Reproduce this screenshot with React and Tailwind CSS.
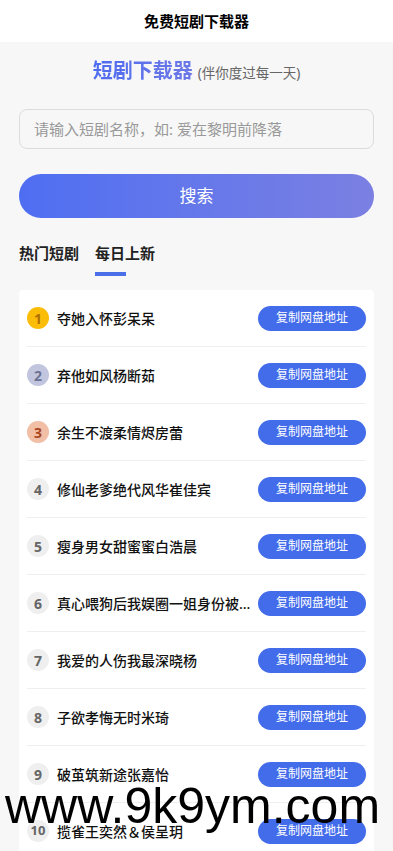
import React, { useState } from "react";

const dramas = [
  "夺她入怀彭呆呆",
  "弃他如风杨断茹",
  "余生不渡柔情烬房蕾",
  "修仙老爹绝代风华崔佳宾",
  "瘦身男女甜蜜蜜白浩晨",
  "真心喂狗后我娱圈一姐身份被曝光了",
  "我爱的人伤我最深晓杨",
  "子欲孝悔无时米琦",
  "破茧筑新途张嘉怡",
  "揽雀王奕然＆侯呈玥",
];

const badgeStyles = [
  "bg-[#fbbd08] text-[#b06d00]",
  "bg-[#c1c6de] text-[#6c7294]",
  "bg-[#f1bea6] text-[#a8461e]",
];

function RankBadge({ n }) {
  const cls = badgeStyles[n - 1] || "bg-[#efefef] text-[#666666]";
  return (
    <div
      className={`w-[22px] h-[22px] shrink-0 rounded-full flex items-center justify-center font-bold ${
        n >= 10 ? "text-[13px]" : "text-[14px]"
      } ${cls}`}
    >
      {n}
    </div>
  );
}

export default function App() {
  const [tab, setTab] = useState(1);
  const [query, setQuery] = useState("");

  return (
    <div
      className="relative min-h-screen bg-[#f7f7f7] text-[#111]"
      style={{ fontFamily: '"Noto Sans", "Noto Sans CJK SC", sans-serif' }}
    >
      {/* top bar */}
      <div className="h-[42px] bg-white flex items-center justify-center">
        <span className="text-[15px] font-bold text-black">免费短剧下载器</span>
      </div>

      <div className="px-[19px]">
        {/* title */}
        <div className="flex items-baseline justify-center pt-[14px] h-[60px]">
          <span className="text-[20px] font-bold bg-gradient-to-r from-[#4f6cf0] to-[#6d78e6] bg-clip-text text-transparent">
            短剧下载器
          </span>
          <span className="ml-[5px] text-[13.5px] text-[#666]">(伴你度过每一天)</span>
        </div>

        {/* input */}
        <div className="mt-[7px]">
          <input
            value={query}
            onChange={(e) => setQuery(e.target.value)}
            placeholder="请输入短剧名称，如: 爱在黎明前降落"
            className="w-full h-[40px] rounded-[8px] border border-[#dcdcdc] bg-[#f7f7f7] px-[14px] text-[15px] text-[#333] placeholder:text-[#999] outline-none"
          />
        </div>

        {/* search button */}
        <button className="mt-[25px] w-full h-[44px] rounded-full bg-gradient-to-r from-[#4e6ef2] to-[#7b80e2] text-white text-[17px]">
          搜索
        </button>

        {/* tabs */}
        <div className="mt-[24px] flex gap-[16px]">
          {["热门短剧", "每日上新"].map((t, i) => (
            <button
              key={t}
              onClick={() => setTab(i)}
              className="flex flex-col items-start"
            >
              <span className="text-[15px] font-bold text-[#222] leading-[22px]">{t}</span>
              <span
                className={`mt-[8px] h-[4px] w-[31px] ${
                  tab === i ? "bg-[#4a6fe8]" : "bg-transparent"
                }`}
              ></span>
            </button>
          ))}
        </div>

        {/* list */}
        <div className="mt-[14px] bg-white rounded-[4px] px-[8px]">
          {dramas.map((name, i) => (
            <div
              key={name}
              className="h-[57px] flex items-center border-b border-[#efefef]"
            >
              <RankBadge n={i + 1} />
              <span className="ml-[8px] flex-1 min-w-0 truncate text-[14px] font-medium text-[#111]">
                {name}
              </span>
              <button className="shrink-0 w-[108px] h-[25px] rounded-full bg-[#436ceb] text-white text-[12px]">
                复制网盘地址
              </button>
            </div>
          ))}
        </div>
      </div>

      {/* watermark overlay */}
      <div
        className="absolute left-[5px] top-[781px] text-[50px] leading-none text-black pointer-events-none"
        style={{ fontFamily: '"Liberation Sans", Arial, sans-serif' }}
      >
        www.9k9ym.com
      </div>
    </div>
  );
}
